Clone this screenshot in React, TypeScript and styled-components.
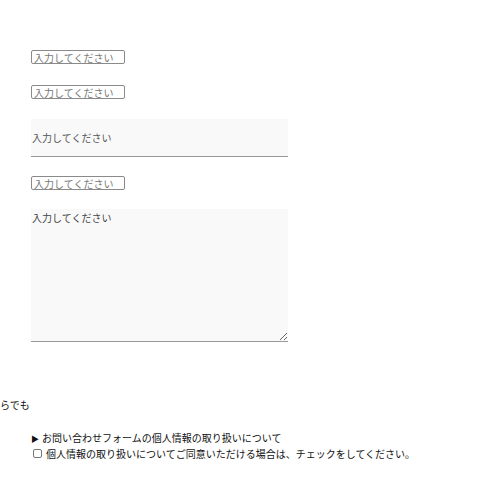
import React from 'react'
import styled, { createGlobalStyle } from 'styled-components'

const GlobalStyle = createGlobalStyle`
  body {
    margin: 0;
    background: #fff;
    font-family: "Noto Sans CJK JP", "Liberation Sans", sans-serif;
    font-size: 10px;
    color: #111;
  }
`

const Page = styled.div`
  width: 480px;
  height: 480px;
  overflow: hidden;
  padding-top: 50px;
  box-sizing: border-box;
`

const Form = styled.form`
  margin-left: 31px;
  display: flex;
  flex-direction: column;
  align-items: flex-start;
`

const Field = styled.div<{ gap?: number }>`
  margin-bottom: ${({ gap }) => gap ?? 21}px;
`

const SmallInput = styled.input`
  display: block;
  box-sizing: border-box;
  width: 94px;
  height: 14px;
  padding: 0 2px;
  border: 1px solid #8a8a8a;
  border-radius: 2px;
  font-family: inherit;
  font-size: 10px;
  color: #333;
  background: #fff;
  &::placeholder {
    color: #777;
  }
`

const FilledInput = styled.input`
  display: block;
  box-sizing: border-box;
  width: 257px;
  height: 38px;
  padding: 0 1px;
  border: none;
  border-bottom: 1px solid #999;
  background: #f9f9f9;
  font-family: inherit;
  font-size: 10px;
  outline: none;
  &::placeholder {
    color: #555;
  }
`

const TextArea = styled.textarea`
  display: block;
  box-sizing: border-box;
  width: 257px;
  height: 133px;
  padding: 2px 1px;
  border: none;
  border-bottom: 1px solid #999;
  background: #f9f9f9;
  font-family: inherit;
  font-size: 10px;
  line-height: 1.4;
  &::placeholder {
    color: #444;
  }
`

const Overflow = styled.div`
  margin-top: 56px;
  font-size: 10px;
  line-height: 14px;
`

const Privacy = styled.div`
  margin: 18px 0 0 31px;
  font-size: 10px;
  line-height: 15px;
`

const Summary = styled.summary`
  cursor: pointer;
  list-style: none;
  &::-webkit-details-marker {
    display: none;
  }
  &::before {
    content: '▶';
    font-size: 8px;
    margin-right: 3px;
  }
`

const CheckLabel = styled.label`
  display: flex;
  align-items: center;
  gap: 4px;
`

const Box = styled.input`
  box-sizing: border-box;
  appearance: none;
  width: 9px;
  height: 9px;
  margin: 0 0 0 2px;
  border: 1px solid #777;
  border-radius: 2px;
  background: #fff;
`

export default function App() {
  return (
    <Page>
      <GlobalStyle />
      <Form>
        <Field>
          <SmallInput placeholder="入力してください" />
        </Field>
        <Field gap={20}>
          <SmallInput placeholder="入力してください" />
        </Field>
        <Field gap={19}>
          <FilledInput placeholder="入力してください" />
        </Field>
        <Field gap={19}>
          <SmallInput placeholder="入力してください" />
        </Field>
        <Field gap={0}>
          <TextArea placeholder="入力してください" />
        </Field>
      </Form>
      <Overflow>らでも</Overflow>
      <Privacy>
        <details>
          <Summary>お問い合わせフォームの個人情報の取り扱いについて</Summary>
        </details>
        <CheckLabel>
          <Box type="checkbox" />
          個人情報の取り扱いについてご同意いただける場合は、チェックをしてください。
        </CheckLabel>
      </Privacy>
    </Page>
  )
}
